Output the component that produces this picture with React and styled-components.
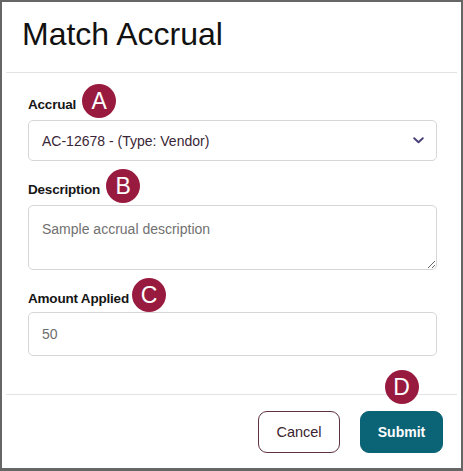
import React from 'react';
import styled, { createGlobalStyle } from 'styled-components';

const GlobalStyle = createGlobalStyle`
  html, body {
    margin: 0;
    padding: 0;
    background: #ffffff;
  }
  * {
    box-sizing: border-box;
  }
`

const Dialog = styled.div`
  width: 463px;
  height: 471px;
  border: 2px solid #666666;
  border-bottom-width: 3px;
  background: #ffffff;
  display: flex;
  flex-direction: column;
  font-family: "Liberation Sans", Arial, sans-serif;
  color: #1a1a1a;
`

const Header = styled.div`
  margin: 0 4px;
  padding: 13px 0 19px 16px;
  border-bottom: 1px solid #e3e3e3;
`

const Title = styled.h1`
  margin: 0;
  font-size: 32px;
  line-height: 38px;
  font-weight: 400;
  color: #111111;
`

const Body = styled.div`
  flex: 1;
  padding: 11px 24px 0 26px;
  display: flex;
  flex-direction: column;
  gap: 8px;
`

const Field = styled.div`
  display: flex;
  flex-direction: column;
`

const LabelRow = styled.div`
  display: flex;
  align-items: center;
  gap: ${p => p.$gap || 6}px;
  height: 34px;
  margin-bottom: ${p => p.$tight ? 0 : 2}px;
`

const Label = styled.label`
  font-size: 13.5px;
  font-weight: 700;
  color: #161616;
  padding-top: 6px;
  letter-spacing: -0.2px;
`

const Badge = styled.span`
  width: 34px;
  height: 34px;
  border-radius: 50%;
  background: #981b3f;
  color: #ffffff;
  font-size: 23px;
  line-height: 34px;
  text-align: center;
  flex-shrink: 0;
`

const FloatingBadge = styled(Badge)`
  position: absolute;
  top: -41px;
  left: 50%;
  transform: translateX(-50%);
`

const SelectBox = styled.div`
  height: 41px;
  border: 1px solid #d6d6d6;
  border-radius: 5px;
  padding: 0 12px 0 13px;
  display: flex;
  align-items: center;
  justify-content: space-between;
  font-size: 14px;
  color: #3a2636;
`

const TextArea = styled.textarea`
  height: 65px;
  border: 1px solid #d6d6d6;
  border-radius: 5px;
  padding: 14px 13px;
  font-family: inherit;
  font-size: 14px;
  line-height: 18px;
  color: #333333;
  resize: vertical;
  outline: none;

  &::placeholder {
    color: #717171;
  }
`

const Input = styled.input`
  height: 44px;
  border: 1px solid #d6d6d6;
  border-radius: 5px;
  padding: 0 13px;
  font-family: inherit;
  font-size: 14px;
  color: #6e6e6e;
  outline: none;
`

const Footer = styled.div`
  margin: 0 4px;
  border-top: 1px solid #e3e3e3;
  padding: 16px 14px 15px 0;
  display: flex;
  justify-content: flex-end;
  gap: 20px;
`

const ButtonWrap = styled.div`
  position: relative;
`

const Button = styled.button`
  height: 42px;
  width: ${p => p.$primary ? 83 : 82}px;
  padding: 0;
  border-radius: 9px;
  font-family: "Liberation Sans", Arial, sans-serif;
  font-size: ${p => p.$primary ? 14 : 14.5}px;
  font-weight: ${p => p.$primary ? 700 : 400};
  border: 1.5px solid ${p => p.$primary ? '#0b6376' : '#5c3242'};
  background: ${p => p.$primary ? '#0b6376' : '#ffffff'};
  color: ${p => p.$primary ? '#ffffff' : '#3a2430'};
  cursor: pointer;
`

function Chevron() {
  return (
    <svg width="11" height="7" viewBox="0 0 11 7" fill="none">
      <path d="M1.2 1.2 L5.5 5.3 L9.8 1.2" stroke="#4a3f78" strokeWidth="1.9" strokeLinecap="round" strokeLinejoin="round" />
    </svg>
  )
}

export default function App() {
  return (
    <>
      <GlobalStyle />
      <Dialog>
        <Header>
          <Title>Match Accrual</Title>
        </Header>

        <Body>
          <Field>
            <LabelRow>
              <Label>Accrual</Label>
              <Badge>A</Badge>
            </LabelRow>
            <SelectBox>
              <span>AC-12678 - (Type: Vendor)</span>
              <Chevron />
            </SelectBox>
          </Field>

          <Field>
            <LabelRow>
              <Label>Description</Label>
              <Badge>B</Badge>
            </LabelRow>
            <TextArea placeholder="Sample accrual description" />
          </Field>

          <Field>
            <LabelRow $gap={3} $tight>
              <Label>Amount Applied</Label>
              <Badge>C</Badge>
            </LabelRow>
            <Input defaultValue="50" />
          </Field>
        </Body>

        <Footer>
          <Button>Cancel</Button>
          <ButtonWrap>
            <FloatingBadge>D</FloatingBadge>
            <Button $primary>Submit</Button>
          </ButtonWrap>
        </Footer>
      </Dialog>
    </>
  )
}
